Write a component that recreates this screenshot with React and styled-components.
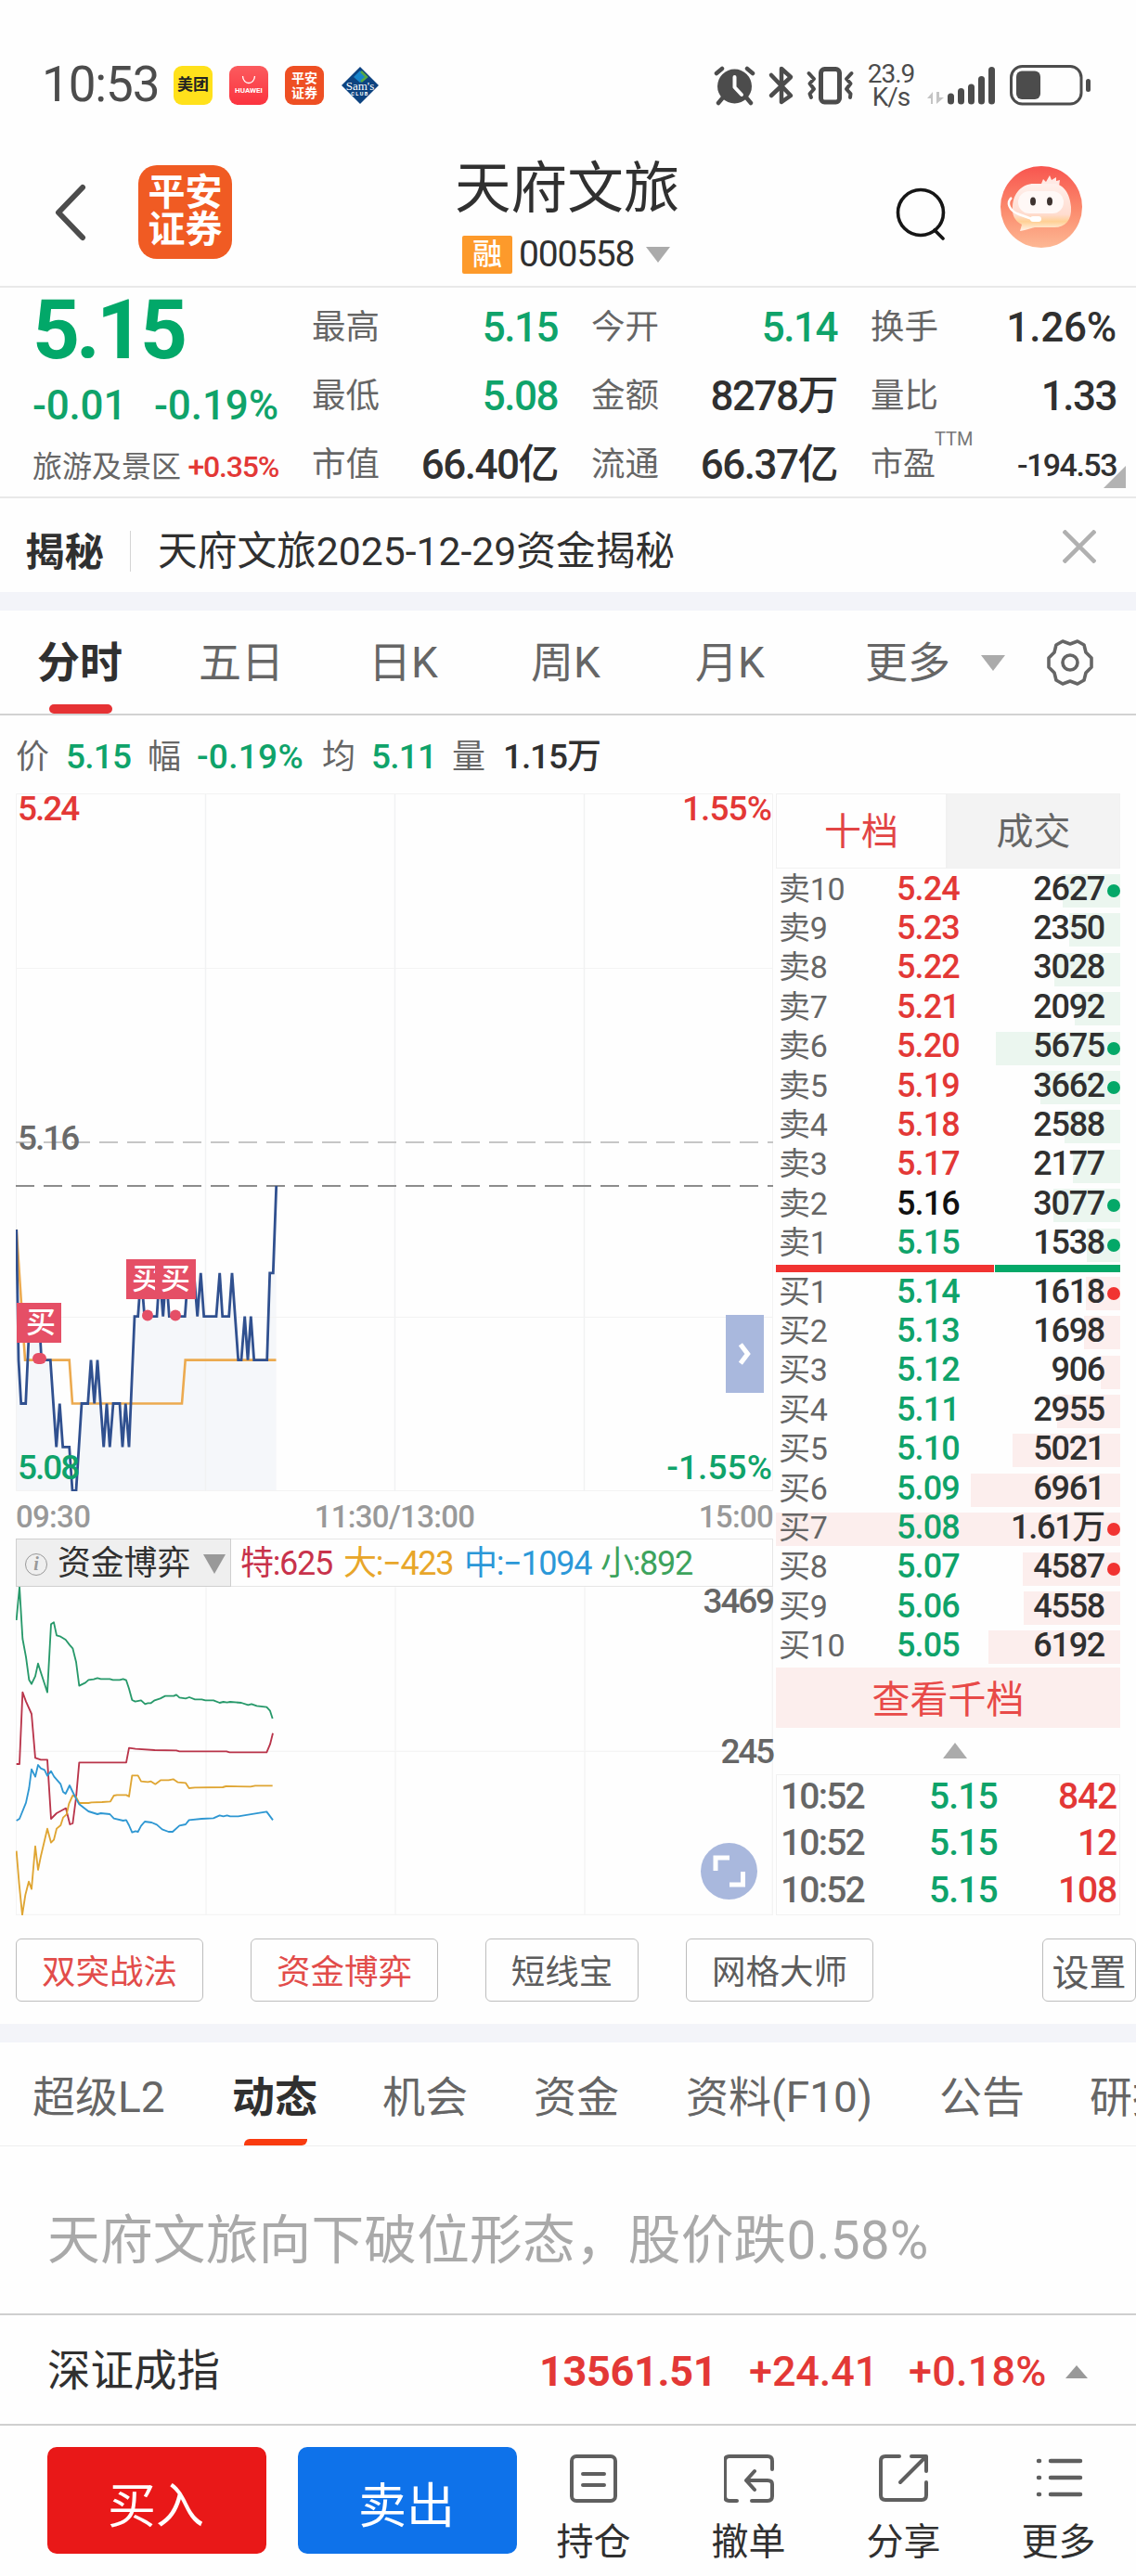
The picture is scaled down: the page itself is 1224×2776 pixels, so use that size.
import React from "react";
import styled, { createGlobalStyle } from "styled-components";

const COLOR = {
  green: "#0fa36a",
  red: "#e33836",
  ink: "#303030",
  gray: "#666666",
  line: "#e9e9e9",
  band: "#f3f4f9",
};

const GlobalStyle = createGlobalStyle`
  * {
    box-sizing: border-box;
  }
  body {
    margin: 0;
    background: #fefefe;
    overflow-x: hidden;
    font-family: Roboto, "Noto Sans CJK SC", sans-serif;
    color: ${COLOR.ink};
  }
  svg {
    display: block;
  }
`;

const Page = styled.div`
  width: 1224px;
  height: 2776px;
  overflow: hidden;
  display: flex;
  flex-direction: column;
`;

const Text = styled.span`
  font-size: ${(p) => p.$size || 36}px;
  font-weight: ${(p) => p.$weight || 400};
  color: ${(p) => p.$color || COLOR.ink};
  letter-spacing: ${(p) => p.$spacing || 0}px;
  line-height: 1.2;
  white-space: nowrap;
`;

/* ---------- status bar ---------- */

const StatusBar = styled.div`
  height: 130px;
  flex: none;
  padding: 52px 48px 0 45px;
  display: flex;
  justify-content: space-between;
`;

const StatusGroup = styled.div`
  height: 80px;
  display: flex;
  align-items: center;
`;

const Clock = styled(Text)`
  width: 142px;
`;

const AppBadge = styled.div`
  width: 42px;
  height: 42px;
  margin-right: 18px;
  border-radius: 9px;
  background: ${(p) => p.$bg};
  color: ${(p) => p.$color || "#fff"};
  font-size: ${(p) => p.$size}px;
  font-weight: 700;
  line-height: 1.15;
  display: flex;
  flex-direction: column;
  align-items: center;
  justify-content: center;
  white-space: nowrap;
`;

const Speed = styled.div`
  width: 54px;
  margin: 0 11px 0 12px;
  font-size: 28px;
  line-height: 25px;
  letter-spacing: -1px;
  color: #4c4c4c;
  text-align: center;
`;

/* ---------- header ---------- */

const Header = styled.header`
  height: 180px;
  flex: none;
  border-bottom: 2px solid ${COLOR.line};
  display: grid;
  grid-template-columns: 250px 1fr 259px;
`;

const HeaderLeft = styled.div`
  padding: 48px 0 0 58px;
  display: flex;
  justify-content: space-between;
`;

const BackIcon = styled.svg`
  margin-top: 19px;
`;

const Logo = styled.div`
  width: 101px;
  height: 101px;
  border-radius: 20px;
  background: #f05b23;
  color: #fff;
  font-size: 40px;
  line-height: 40px;
  font-weight: 700;
  text-align: center;
  padding-top: 10px;
`;

const HeaderTitle = styled.div`
  padding: 36px 0 0 0;
  margin-left: 240px;
`;

const StockName = styled.div`
  font-size: 60.6px;
  line-height: 76px;
  white-space: nowrap;
`;

const StockCode = styled.div`
  height: 42px;
  margin: 11px 0 0 8px;
  display: flex;
  align-items: center;
`;

const MarginTag = styled.span`
  width: 54px;
  height: 41px;
  margin-right: 7px;
  background: #fd9a2b;
  color: #fff;
  font-size: 32px;
  line-height: 40px;
  font-weight: 500;
  text-align: center;
  border-radius: 2px;
`;

const HeaderRight = styled.div`
  display: flex;
  padding-top: 49px;
`;

/* ---------- quote ---------- */

const Quote = styled.section`
  position: relative;
  height: 227px;
  flex: none;
  border-bottom: 2px solid ${COLOR.line};
  display: grid;
  grid-template-columns: 265px 265px 265px 265px;
  column-gap: 36px;
  padding: 4px 20px 0 35px;
`;

const PriceBlock = styled.div`
  display: flex;
  flex-direction: column;
`;

const BigPrice = styled.div`
  height: 85px;
  font-size: 89px;
  line-height: 84px;
  font-weight: 700;
  letter-spacing: -4px;
  color: #02a869;
`;

const PriceLine = styled.div`
  height: ${(p) => p.$height}px;
  display: flex;
  align-items: center;
  justify-content: space-between;
`;

const StatColumn = styled.div`
  padding-top: 2px;
  display: flex;
  flex-direction: column;
`;

const StatRow = styled.div`
  height: 74px;
  display: flex;
  align-items: center;
  justify-content: space-between;
`;

const Ttm = styled.sup`
  position: absolute;
  left: 1007px;
  top: 151px;
  font-size: 20px;
  color: #777;
`;

const Corner = styled.i`
  position: absolute;
  right: 11px;
  bottom: 9px;
  border-left: 24px solid transparent;
  border-bottom: 24px solid #b3b3b3;
`;

const Triangle = styled.i`
  flex: none;
  align-self: ${(p) => p.$align || "center"};
  border-left: ${(p) => p.$half || 13}px solid transparent;
  border-right: ${(p) => p.$half || 13}px solid transparent;
  border-${(p) => (p.$up ? "bottom" : "top")}: ${(p) => p.$height || 17}px solid ${(p) => p.$color || "#ababab"};
`;

/* ---------- notice ---------- */

const Notice = styled.div`
  height: 101px;
  flex: none;
  padding: 15px 43px 0 27px;
  display: flex;
  align-items: center;
`;

const NoticeRule = styled.i`
  width: 1px;
  height: 44px;
  margin: -3px 29px 0 28px;
  background: #d4d4d4;
`;

const CloseIcon = styled.svg`
  margin: -12px 0 0 auto;
`;

const Band = styled.div`
  height: 20px;
  flex: none;
  background: ${COLOR.band};
`;

/* ---------- tabs ---------- */

const PeriodTabs = styled.nav`
  height: 113px;
  flex: none;
  padding-left: 40px;
  border-bottom: 2px solid #d2d2d2;
  display: flex;
`;

const Tab = styled.div`
  width: ${(p) => p.$width}px;
  flex: none;
  padding-top: ${(p) => p.$top || 28}px;
  font-size: 46px;
  line-height: 56px;
  white-space: nowrap;
  font-weight: ${(p) => (p.$active ? 700 : 400)};
  color: ${(p) => (p.$active ? COLOR.ink : COLOR.gray)};
`;

const TabMark = styled.i`
  display: block;
  width: 68px;
  height: 10px;
  margin: 17px 0 0 13px;
  border-radius: 5px;
  background: #e63234;
`;

const GearIcon = styled.svg`
  margin: 30px 0 0 45px;
`;

const InfoRow = styled.div`
  height: 84px;
  flex: none;
  padding: 7px 0 0 17px;
  display: flex;
  align-items: center;
`;

const InfoValue = styled(Text)`
  width: ${(p) => p.$width}px;
  flex: none;
`;

/* ---------- chart + book ---------- */

const Market = styled.section`
  height: 1210px;
  flex: none;
  padding: 0 17px;
  display: grid;
  grid-template-columns: 816px 371px;
  column-gap: 3px;
`;

const Charts = styled.div`
  display: flex;
  flex-direction: column;
`;

const PriceChart = styled.div`
  position: relative;
  height: 752px;
`;

const ChartLabel = styled.span`
  position: absolute;
  top: ${(p) => p.$top}px;
  ${(p) => (p.$right ? `right: ${p.$right}px` : "left: 2px")};
  font-size: 37px;
  line-height: 44px;
  font-weight: 500;
  letter-spacing: ${(p) => p.$spacing ?? -2}px;
  color: ${(p) => p.$color};
`;

const BuyFlag = styled.span`
  position: absolute;
  left: ${(p) => p.$left}px;
  top: ${(p) => p.$top}px;
  width: ${(p) => p.$width}px;
  height: 43px;
  padding-left: ${(p) => p.$pad}px;
  overflow: hidden;
  background: #e54f66;
  color: #fff;
  font-size: 32px;
  line-height: 43px;
  font-weight: 500;
`;

const Expander = styled.div`
  position: absolute;
  right: 10px;
  top: 562px;
  width: 41px;
  height: 84px;
  background: #a9b8dd;
  display: flex;
  align-items: center;
  justify-content: center;
`;

const TimeAxis = styled.div`
  height: 51px;
  padding-top: 5px;
  display: flex;
  justify-content: space-between;
`;

const AxisText = styled(Text)`
  font-size: 33px;
  font-weight: 500;
  letter-spacing: -0.7px;
  color: #999;
  line-height: 46px;
`;

const FlowBar = styled.div`
  height: 52px;
  border: 1px solid #e6e6e6;
  display: flex;
  align-items: center;
`;

const FlowPicker = styled.div`
  width: 232px;
  height: 52px;
  margin: 0 10px 0 -1px;
  border: 1px solid #cfcfcf;
  background: #efefef;
  padding: 3px 3px 0 9px;
  display: flex;
  align-items: center;
`;

const FlowName = styled(Text)`
  margin: 0 14px 0 11px;
`;

const InfoDot = styled.span`
  width: 24px;
  height: 24px;
  border: 1px solid #999;
  border-radius: 50%;
  font: italic 700 20px/21px "Liberation Serif", serif;
  color: #999;
  text-align: center;
`;

const FlowItem = styled(Text)`
  width: ${(p) => p.$width}px;
  flex: none;
  padding-top: 3px;
  letter-spacing: -1.3px;
`;

const FlowChart = styled.div`
  position: relative;
  height: 354px;
`;

const ZoomButton = styled.div`
  position: absolute;
  right: 17px;
  top: 276px;
  width: 61px;
  height: 61px;
  border-radius: 50%;
  background: #a9b8dd;
`;

const Book = styled.div`
  display: flex;
  flex-direction: column;
`;

const BookTabs = styled.div`
  height: 81px;
  margin-bottom: 3px;
  display: grid;
  grid-template-columns: 184px 187px;
`;

const BookTab = styled.div`
  border: 1px solid #f1f1f1;
  background: ${(p) => (p.$active ? "transparent" : "#f3f3f3")};
  color: ${(p) => (p.$active ? "#e24545" : COLOR.gray)};
  font-size: 40px;
  line-height: 82px;
  height: 81px;
  text-align: center;
`;

const Level = styled.div`
  height: 42.4px;
  padding: 3px 0 3px 3px;
  background: linear-gradient(${(p) => p.$bar}, ${(p) => p.$bar}) right 3px / ${(p) => p.$fill}px 36px no-repeat;
  display: grid;
  grid-template-columns: 127px 1fr 154px 17px;
  align-items: center;
  line-height: 30px;
`;

const LevelText = styled(Text)`
  line-height: 30px;
  margin-top: -5px;
  text-align: ${(p) => (p.$end ? "right" : "left")};
`;

const Dot = styled.i`
  width: 14px;
  height: 14px;
  margin-left: 3px;
  border-radius: 50%;
  background: ${(p) => p.$color};
`;

const Balance = styled.div`
  height: 8px;
  margin: 0 0 2px;
  display: grid;
  grid-template-columns: 235px 135px;
  gap: 1px;
  & > i:first-child {
    background: #f13331;
  }
  & > i:last-child {
    background: #04a868;
  }
`;

const MoreLevels = styled.div`
  height: 65px;
  background: #fceeed;
  color: #e84a48;
  font-size: 41px;
  line-height: 70px;
  text-align: center;
`;

const Collapse = styled.div`
  height: 50px;
  display: flex;
  justify-content: center;
  padding: 16px 0 0 15px;
`;

const Deals = styled.div`
  height: 152px;
  border: 1px solid #f1f1f1;
  padding: 0 3px 0 4px;
`;

const Deal = styled.div`
  height: 50.4px;
  padding-bottom: 8px;
  display: grid;
  grid-template-columns: 160px 1fr 100px;
  align-items: center;
  & > span:last-child {
    text-align: right;
  }
`;

/* ---------- tools ---------- */

const Tools = styled.div`
  height: 116px;
  flex: none;
  padding: 24px 0 0 17px;
  display: flex;
  gap: 51px;
`;

const Tool = styled.button`
  width: ${(p) => p.$width}px;
  height: 68px;
  flex: none;
  padding: 0 0 1px;
  border: 1px solid #bdbdbd;
  border-radius: 6px;
  background: none;
  font-family: inherit;
  font-size: ${(p) => p.$size || 36.5}px;
  white-space: nowrap;
  color: ${(p) => (p.$hot ? "#e24c4a" : "#5c5c5c")};
  &:last-child {
    margin-left: auto;
  }
`;

const DetailTabs = styled.nav`
  height: 112px;
  flex: none;
  padding-left: 35px;
  border-bottom: 1px solid #eee;
  display: flex;
  overflow: hidden;
`;

const DetailMark = styled.i`
  display: block;
  width: 68px;
  height: 7px;
  margin: 17px 0 0 13px;
  border-radius: 6px 0 6px 0;
  background: #f93b0f;
`;

const News = styled.div`
  height: 182px;
  flex: none;
  padding: 24px 0 0 51px;
  border-bottom: 2px solid #cfcfcf;
  display: flex;
  align-items: center;
`;

const IndexRow = styled.div`
  height: 119px;
  flex: none;
  padding: 5px 51px 0 51px;
  border-bottom: 2px solid #cfcfcf;
  display: flex;
  align-items: center;
`;

const IndexName = styled(Text)`
  width: 530px;
`;

const BottomBar = styled.footer`
  height: 162px;
  padding: 23px 0 0 51px;
  display: flex;
`;

const TradeButton = styled.button`
  width: 236px;
  height: 115px;
  margin-right: ${(p) => p.$gap}px;
  padding: 3px 2px 0 0;
  flex: none;
  border: 0;
  border-radius: 10px;
  background: ${(p) => p.$bg};
  color: #fff;
  font-family: inherit;
  font-size: 52px;
`;

const Action = styled.div`
  width: 167px;
  flex: none;
  display: flex;
  flex-direction: column;
  align-items: center;
  font-size: 40px;
  line-height: 48px;
  & > svg {
    margin: 7px 0 18px;
  }
`;

const sells = [
  ["10", "5.24", "2627", 62, 1],
  ["9", "5.23", "2350", 55, 0],
  ["8", "5.22", "3028", 71, 0],
  ["7", "5.21", "2092", 49, 0],
  ["6", "5.20", "5675", 134, 1],
  ["5", "5.19", "3662", 86, 1],
  ["4", "5.18", "2588", 60, 0],
  ["3", "5.17", "2177", 51, 0],
  ["2", "5.16", "3077", 72, 1],
  ["1", "5.15", "1538", 36, 1],
];

const buys = [
  ["1", "5.14", "1618", 37, 1],
  ["2", "5.13", "1698", 39, 0],
  ["3", "5.12", "906", 21, 0],
  ["4", "5.11", "2955", 68, 0],
  ["5", "5.10", "5021", 116, 0],
  ["6", "5.09", "6961", 161, 0],
  ["7", "5.08", "1.61万", 371, 1],
  ["8", "5.07", "4587", 105, 1],
  ["9", "5.06", "4558", 104, 0],
  ["10", "5.05", "6192", 142, 0],
];

const stats = [
  [
    ["最高", "5.15", COLOR.green],
    ["最低", "5.08", COLOR.green],
    ["市值", "66.40亿"],
  ],
  [
    ["今开", "5.14", COLOR.green],
    ["金额", "8278万"],
    ["流通", "66.37亿"],
  ],
  [
    ["换手", "1.26%"],
    ["量比", "1.33"],
    ["市盈", "-194.53"],
  ],
];

// one tick is 47px; each entry is [x, ticks below 5.15]
const priceTicks = [
  [0.7, 1], [3, 4], [5.7, 5], [10.7, 5], [15, 3], [25, 3], [27.7, 4], [37.3, 4], [43.7, 6], [47.3, 5], [50.7, 6],
  [57.7, 6], [61, 7], [65, 7], [71, 5], [77.7, 5], [81, 4], [84.7, 5], [88, 4], [94.7, 6], [98, 5], [101.3, 6],
  [105, 5], [112, 5], [115, 6], [118.3, 5], [122, 6], [128, 3], [131.7, 3], [135, 2], [138.7, 3], [152, 3], [155, 2],
  [158.7, 3], [162, 2], [165.3, 3], [182.3, 3], [185.7, 2], [192, 2], [195.7, 3], [199.3, 2], [202.7, 3], [216, 3],
  [219.7, 2], [222.7, 3], [229.7, 3], [233, 2], [239.7, 4], [243, 4], [246.7, 3], [250, 4], [253.3, 3], [256.7, 4],
  [270.7, 4], [273.7, 2], [277.3, 2], [280.7, 0],
];
const averageTicks = [[0.7, 1], [10, 4], [57.7, 4], [61, 5], [179, 5], [182.7, 4], [280.5, 4]];
const toPoints = (ticks) => ticks.map(([x, n]) => `${x},${423 + n * 46.9}`).join(" ");

const flows = [
  ["#27996a", "53,317 63,210 73,377 84,436 94,510 102,523 114,498 123,457 132,486 153,550 165,330 174,324 183,366 196,370 212,380 225,397 235,408 246,452 256,529 276,519 286,510 303,508 315,504 326,507 355,507 365,510 387,510 398,507 408,511 417,538 427,575 437,580 456,576 469,588 478,585 488,585 500,576 518,570 534,562 562,562 570,558 580,567 600,570 612,566 630,573 652,573 664,576 690,576 710,584 722,581 734,583 744,581 780,584 802,591 813,588 830,594 862,598 873,610 881,635"],
  ["#b9344a", "53,782 63,782 73,550 84,580 102,620 114,762 132,768 153,768 165,959 183,941 205,929 213,925 226,977 235,974 246,890 256,777 408,777 417,730 438,733 500,737 570,738 580,741 732,741 742,744 862,744 873,718 882,682"],
  ["#dfa532", "53,1063 62,1170 72,1270 82,1205 93,1162 102,1186 114,1048 123,1124 132,1080 153,991 165,1036 174,1027 183,991 196,980 204,955 215,945 223,910 235,884 245,887 256,908 286,908 296,906 330,905 357,903 368,884 378,882 408,882 417,887 427,819 446,819 456,838 478,840 488,838 502,847 520,834 545,834 560,831 575,841 600,843 611,860 630,858 720,857 730,854 810,855 825,852 881,852"],
  ["#2e97d2", "53,965 63,959 84,907 94,860 102,799 114,823 123,785 132,796 144,801 153,820 165,805 175,823 196,847 204,872 212,878 225,851 235,872 246,894 256,912 286,935 315,944 326,941 355,944 368,958 398,965 408,963 417,980 427,1003 438,999 446,1001 456,982 468,968 490,971 507,978 524,993 545,1001 558,1001 580,981 600,977 611,963 652,959 690,957 710,948 722,951 734,948 744,951 770,951 802,946 862,936 882,963"],
];

function SamsIcon() {
  return (
    <svg width="42" height="42" viewBox="0 0 42 42">
      <path d="M21 1 41 21 21 41 1 21Z" fill="#0d4380" />
      <path d="M21 5 29 12 21 18 14 12Z" fill="#1785cc" />
      <path d="M22 6 28 12 22 17" fill="none" stroke="#55a944" strokeWidth="2.5" />
      <text x="21" y="26" textAnchor="middle" fontFamily="Liberation Serif" fontSize="13" fill="#fff">Sam's</text>
      <text x="21" y="32" textAnchor="middle" fontSize="5.5" letterSpacing="1.5" fontWeight="700" fill="#fff">CLUB</text>
    </svg>
  );
}

function StatusIcons() {
  return (
    <svg width="152" height="44" viewBox="769 69 152 44" fill="none" stroke="#4c4c4c" strokeLinecap="round" strokeLinejoin="round">
      <circle cx="791.5" cy="92" r="18.5" fill="#4c4c4c" stroke="none" />
      <path d="M772 78 778 73M811 78 805 73M779 104 774 110M804 104 809 110" strokeWidth="4.5" />
      <path d="M791.5 82V93L799 101" stroke="#fff" strokeWidth="4" />
      <path d="M831 80 852 102 842 109V73L852 82 831 102" strokeWidth="4.5" />
      <rect x="884.5" y="73.500" width="20" height="35.500" rx="4" strokeWidth="5" />
      <path d="M871.500 78 877 84 872.500 89 877 95 872.500 100 874 104M917.500 78 912 84 916.500 89 912 95 916.500 100 916 104" strokeWidth="4" />
    </svg>
  );
}

function SignalIcons() {
  return (
    <svg width="178" height="44" viewBox="997 69 178 44">
      <path d="M1004 111V98L998 105H1002V111ZM1008 98V111L1016 104H1011V98Z" fill="#c4c4c4" />
      <g fill="#4c4c4c">
        <rect x="1020" y="99.500" width="7" height="12" rx="3.500" />
        <rect x="1031" y="94" width="7" height="17.500" rx="3.500" />
        <rect x="1042" y="89.500" width="7" height="22" rx="3.500" />
        <rect x="1053" y="81" width="7" height="30.500" rx="3.500" />
        <rect x="1064" y="71" width="7" height="40.500" rx="3.500" />
        <rect x="1094" y="75.500" width="26" height="30.500" rx="6" />
        <rect x="1169" y="84" width="5" height="14" rx="2.500" />
      </g>
      <rect x="1088.500" y="70.500" width="75.500" height="40.500" rx="12" fill="none" stroke="#4c4c4c" strokeWidth="3" />
    </svg>
  );
}

function Avatar() {
  return (
    <svg width="88" height="88" viewBox="0 0 88 88">
      <defs>
        <linearGradient id="face" x1="0" y1="0" x2="0" y2="1">
          <stop offset="0" stopColor="#f8554f" />
          <stop offset="0.55" stopColor="#fb8c6e" />
          <stop offset="1" stopColor="#fdb894" />
        </linearGradient>
        <linearGradient id="body" x1="0" y1="0" x2="0" y2="1">
          <stop offset="0" stopColor="#fff0ec" />
          <stop offset="0.65" stopColor="#ffdccf" />
          <stop offset="0.8" stopColor="#ffd094" />
          <stop offset="1" stopColor="#fff3ec" />
        </linearGradient>
      </defs>
      <circle cx="44" cy="44" r="44" fill="url(#face)" />
      <path d="M44 19 46 14 49 17 53 10 55 15 60 12 60 16 64 15 63 22Z" fill="#ffe9e4" />
      <path d="M36 19H57C68 19 75 30 76 44C77 58 70 66 58 66H37C31 67 29 69 21 70L23 63C15 59 12 52 13 43C14 29 23 19 36 19Z" fill="url(#body)" />
      <rect x="19" y="27" width="49" height="24" rx="12" fill="#fff8f6" />
      <ellipse cx="35" cy="38" rx="3" ry="4.500" fill="#3e3330" />
      <ellipse cx="53" cy="38" rx="3" ry="4.500" fill="#3e3330" />
      <path d="M12 34C6 39 9 48 20 52L34 57" fill="none" stroke="#fff" strokeWidth="2.500" />
      <rect x="32" y="54" width="12" height="6" rx="3" fill="#fff" />
    </svg>
  );
}

function Levels({ rows, side }) {
  const sell = side === "卖";
  return rows.map(([n, price, volume, fill, dot]) => {
    const priceColor = price === "5.16" ? "#111" : price > "5.16" ? COLOR.red : COLOR.green;
    return (
      <Level key={n} $fill={fill} $bar={sell ? "#ebf6ef" : "#fceeed"}>
        <LevelText $size={34} $color={COLOR.gray} $spacing={-0.3}>{side}{n}</LevelText>
        <LevelText $size={36} $weight={500} $color={priceColor} $spacing={-0.9}>{price}</LevelText>
        <LevelText $size={36} $weight={500} $spacing={-1.3} $end>{volume}</LevelText>
        {dot ? <Dot $color={sell ? "#04a868" : "#f13331"} /> : null}
      </Level>
    );
  });
}

export default function App() {
  return (
    <Page>
      <GlobalStyle />
      <StatusBar>
        <StatusGroup>
          <Clock $size={53} $color="#4c4c4c" $spacing={-1.1}>10:53</Clock>
          <AppBadge $bg="#ffe11b" $color="#222" $size={17}>美团</AppBadge>
          <AppBadge $bg="linear-gradient(#fb5b5e, #fb333f)" $size={8}>
            <svg width="16" height="12" viewBox="0 0 16 12" fill="none" stroke="#fff" strokeWidth="1.300">
              <path d="M1.500 1C2 11 14 11 14.500 1" />
            </svg>
            HUAWEI
          </AppBadge>
          <AppBadge $bg="#ee4f23" $size={14}>
            <span>平安</span>
            <span>证券</span>
          </AppBadge>
          <SamsIcon />
        </StatusGroup>
        <StatusGroup>
          <StatusIcons />
          <Speed>23.9<br />K/s</Speed>
          <SignalIcons />
        </StatusGroup>
      </StatusBar>

      <Header>
        <HeaderLeft>
          <BackIcon width="36" height="64" viewBox="0 0 36 64" fill="none" stroke="#4c4c4c" strokeWidth="6" strokeLinecap="round" strokeLinejoin="round">
            <path d="M31 5 5 32 31 59" />
          </BackIcon>
          <Logo>平安<br />证券</Logo>
        </HeaderLeft>
        <HeaderTitle>
          <StockName>天府文旅</StockName>
          <StockCode>
            <MarginTag>融</MarginTag>
            <Text $size={39} $spacing={-1.2}>000558</Text>
            <Triangle style={{ marginLeft: 13 }} />
          </StockCode>
        </HeaderTitle>
        <HeaderRight>
          <svg width="113" height="88" viewBox="965 179 113 88" fill="none" stroke="#161616" strokeWidth="3.600" strokeLinecap="round">
            <circle cx="992" cy="229" r="24.500" />
            <path d="M1007 248 1016 257" />
          </svg>
          <Avatar />
        </HeaderRight>
      </Header>

      <Quote>
        <PriceBlock>
          <BigPrice>5.15</BigPrice>
          <PriceLine $height={76}>
            <Text $size={44} $weight={500} $color={COLOR.green} $spacing={-0.2}>-0.01</Text>
            <Text $size={44} $weight={500} $color={COLOR.green} $spacing={-0.1}>-0.19%</Text>
          </PriceLine>
          <PriceLine $height={56}>
            <Text $size={32} $color={COLOR.gray}>旅游及景区</Text>
            <Text $size={32} $weight={500} $color={COLOR.red} $spacing={-1.2}>+0.35%</Text>
          </PriceLine>
        </PriceBlock>
        {stats.map((column) => (
          <StatColumn key={column[0][0]}>
            {column.map(([label, value, color]) => (
              <StatRow key={label}>
                <Text $size={label === "市盈" ? 35 : 36.5} $color={COLOR.gray}>{label}</Text>
                <Text
                  $size={label === "市盈" ? 34 : 44}
                  $weight={500}
                  $color={color}
                  $spacing={value.endsWith("%") ? -0.2 : -1.5}
                >
                  {value}
                </Text>
              </StatRow>
            ))}
          </StatColumn>
        ))}
        <Ttm>TTM</Ttm>
        <Corner />
      </Quote>

      <Notice>
        <Text $size={42.5} $weight={700}>揭秘</Text>
        <NoticeRule />
        <Text $size={42.7}>天府文旅2025-12-29资金揭秘</Text>
        <CloseIcon width="36" height="36" viewBox="0 0 36 36" stroke="#b0b0b0" strokeWidth="4.500">
          <path d="M1 1 35 35M35 1 1 35" />
        </CloseIcon>
      </Notice>
      <Band />

      <PeriodTabs>
        <Tab $width={174} $active>
          分时
          <TabMark />
        </Tab>
        <Tab $width={183}>五日</Tab>
        <Tab $width={175}>日K</Tab>
        <Tab $width={177}>周K</Tab>
        <Tab $width={183}>月K</Tab>
        <Tab $width={125}>更多</Tab>
        <Triangle $align="flex-start" style={{ marginTop: 48 }} />
        <GearIcon width="50" height="52" viewBox="0 0 50 52" fill="none" stroke="#666" strokeWidth="3.600" strokeLinejoin="round">
          <path d="M17 3 25 6 33 3 40 7 42 15 48 21V31L42 37 40 45 33 49 25 46 17 49 10 45 8 37 2 31V21L8 15 10 7Z" />
          <circle cx="25" cy="26" r="8" />
        </GearIcon>
      </PeriodTabs>

      <InfoRow>
        <InfoValue $width={54} $color={COLOR.gray}>价</InfoValue>
        <InfoValue $width={88} $size={37} $weight={500} $color={COLOR.green} $spacing={-0.8}>5.15</InfoValue>
        <InfoValue $width={53} $color={COLOR.gray}>幅</InfoValue>
        <InfoValue $width={135} $size={37} $weight={500} $color={COLOR.green} $spacing={0.3}>-0.19%</InfoValue>
        <InfoValue $width={53} $color={COLOR.gray}>均</InfoValue>
        <InfoValue $width={87} $size={37} $weight={500} $color={COLOR.green} $spacing={-0.8}>5.11</InfoValue>
        <InfoValue $width={55} $color={COLOR.gray}>量</InfoValue>
        <InfoValue $width={120} $size={37} $weight={500} $spacing={-1.1}>1.15万</InfoValue>
      </InfoRow>

      <Market>
        <Charts>
          <PriceChart>
            <svg width="816" height="752" viewBox="0 0 816 752" fill="none">
              <polygon points={`${toPoints(priceTicks)} 280.700,751 0.700,751`} fill="#f5f7fa" />
              <path d="M0.500 0.500H815.500V751.500H0.500ZM0 188.500H816M0 564.500H816" stroke="#f3f3f3" />
              <path d="M204.500 0V752M408.500 0V752M612.500 0V752" stroke="#f1f2f3" strokeWidth="1.500" />
              <path d="M0 376H816" stroke="#c6c6c6" strokeWidth="2" strokeDasharray="20 10" />
              <path d="M0 423H816" stroke="#8c8c8c" strokeWidth="2" strokeDasharray="20 10" />
              <polyline points={toPoints(averageTicks)} stroke="#ecaa4f" strokeWidth="2.600" />
              <polyline points={toPoints(priceTicks)} stroke="#30508f" strokeWidth="2.800" />
              <g fill="#e54f66">
                <rect x="18" y="603" width="15" height="12" rx="6" />
                <circle cx="142" cy="562.500" r="6" />
                <circle cx="172" cy="562.500" r="6" />
              </g>
            </svg>
            <ChartLabel $top={-5} $color={COLOR.red}>5.24</ChartLabel>
            <ChartLabel $top={-5} $color={COLOR.red} $spacing={-0.9} $right={2}>1.55%</ChartLabel>
            <ChartLabel $top={350} $color="#6a6a6a">5.16</ChartLabel>
            <ChartLabel $top={705} $color={COLOR.green}>5.08</ChartLabel>
            <ChartLabel $top={705} $color={COLOR.green} $spacing={0.1} $right={1}>-1.55%</ChartLabel>
            <BuyFlag $left={1} $top={549} $width={48} $pad={10}>买</BuyFlag>
            <BuyFlag $left={119} $top={502} $width={31} $pad={6}>买</BuyFlag>
            <BuyFlag $left={150} $top={502} $width={44} $pad={6}>买</BuyFlag>
            <Expander>
              <svg width="16" height="24" viewBox="0 0 16 28" fill="none" stroke="#fff" strokeWidth="6">
                <path d="M2 2 11 14 2 26" />
              </svg>
            </Expander>
          </PriceChart>
          <TimeAxis>
            <AxisText>09:30</AxisText>
            <AxisText>11:30/13:00</AxisText>
            <AxisText>15:00</AxisText>
          </TimeAxis>
          <FlowBar>
            <FlowPicker>
              <InfoDot>i</InfoDot>
              <FlowName $size={35.8}>资金博弈</FlowName>
              <Triangle $half={12.5} $height={21} $color="#999" />
            </FlowPicker>
            <FlowItem $width={111} $color="#c8324b">特:625</FlowItem>
            <FlowItem $width={130} $color="#e8a62a">大:−423</FlowItem>
            <FlowItem $width={147} $color="#2b98d8">中:−1094</FlowItem>
            <FlowItem $width={100} $color="#3da35d">小:892</FlowItem>
          </FlowBar>
          <FlowChart>
            <svg width="816" height="354" viewBox="51 209 2448 1062" fill="none">
              <path d="M52 210V1269H2497V210M52 741H2497M666 210V1269M1278 210V1269M1890 210V1269" stroke="#f4f4f4" strokeWidth="4" />
              {flows.map(([color, points]) => (
                <polyline key={color} points={points} stroke={color} strokeWidth="5.500" strokeLinejoin="round" />
              ))}
            </svg>
            <ChartLabel $top={-6} $color={COLOR.gray} $spacing={-2.2} $right={0.1}>3469</ChartLabel>
            <ChartLabel $top={156} $color={COLOR.gray} $spacing={-2.2} $right={0.1}>245</ChartLabel>
            <ZoomButton>
              <svg width="61" height="61" viewBox="0 0 61 61" fill="none" stroke="#fff" strokeWidth="5">
                <path d="M31 16H16V30M31 45H45.500V31" />
              </svg>
            </ZoomButton>
          </FlowChart>
        </Charts>

        <Book>
          <BookTabs>
            <BookTab $active>十档</BookTab>
            <BookTab>成交</BookTab>
          </BookTabs>
          <Levels rows={sells} side="卖" />
          <Balance>
            <i />
            <i />
          </Balance>
          <Levels rows={buys} side="买" />
          <MoreLevels>查看千档</MoreLevels>
          <Collapse>
            <Triangle $up $align="flex-start" />
          </Collapse>
          <Deals>
            {["842", "12", "108"].map((volume) => (
              <Deal key={volume}>
                <Text $size={39} $weight={500} $color={COLOR.gray} $spacing={-1.8}>10:52</Text>
                <Text $size={39} $weight={500} $color={COLOR.green} $spacing={-0.9}>5.15</Text>
                <Text $size={39} $weight={500} $color={COLOR.red} $spacing={-1.2}>{volume}</Text>
              </Deal>
            ))}
          </Deals>
        </Book>
      </Market>

      <Tools>
        <Tool $width={202} $hot>双突战法</Tool>
        <Tool $width={202} $hot>资金博弈</Tool>
        <Tool $width={165}>短线宝</Tool>
        <Tool $width={202}>网格大师</Tool>
        <Tool $width={101} $size={40}>设置</Tool>
      </Tools>
      <Band />

      <DetailTabs>
        <Tab $width={215} $top={31}>超级L2</Tab>
        <Tab $width={162} $top={31} $active>
          动态
          <DetailMark />
        </Tab>
        <Tab $width={163} $top={31}>机会</Tab>
        <Tab $width={164} $top={31}>资金</Tab>
        <Tab $width={273} $top={31}>资料(F10)</Tab>
        <Tab $width={162} $top={31}>公告</Tab>
        <Tab $width={92} $top={31}>研报</Tab>
      </DetailTabs>

      <News>
        <Text $size={56.7} $color="#a9a9a9" $spacing={0.2}>天府文旅向下破位形态，股价跌0.58%</Text>
      </News>

      <IndexRow>
        <IndexName $size={46.5}>深证成指</IndexName>
        <InfoValue $width={226} $size={45} $weight={700} $color={COLOR.red} $spacing={-0.3}>13561.51</InfoValue>
        <InfoValue $width={172} $size={45} $weight={500} $color={COLOR.red} $spacing={-0.1}>+24.41</InfoValue>
        <InfoValue $width={169} $size={45} $weight={500} $color={COLOR.red} $spacing={0.2}>+0.18%</InfoValue>
        <Triangle $up $half={12} $height={14} $color="#999" />
      </IndexRow>

      <BottomBar>
        <TradeButton $bg="#e91818" $gap={34}>买入</TradeButton>
        <TradeButton $bg="#0e72ea" $gap={-1}>卖出</TradeButton>
        <Action>
          <svg width="54" height="54" viewBox="0 0 54 54" fill="none" stroke="#5f5f5f" strokeWidth="4" strokeLinecap="round">
            <rect x="3" y="3" width="47" height="48" rx="5" />
            <path d="M15 22H38M15 34H38" />
          </svg>
          持仓
        </Action>
        <Action>
          <svg width="54" height="54" viewBox="0 0 54 54" fill="none" stroke="#5f5f5f" strokeWidth="4" strokeLinecap="round" strokeLinejoin="round">
            <path d="M52 17V8Q52 3 47 3H6Q1 3 1 8V46Q1 51 6 51H14M30 51H47Q52 51 52 46V33Q52 29 47 29H24M33 19 24 29 33 39" />
          </svg>
          撤单
        </Action>
        <Action>
          <svg width="54" height="54" viewBox="0 0 54 54" fill="none" stroke="#5f5f5f" strokeWidth="4" strokeLinecap="round" strokeLinejoin="round">
            <path d="M22 3H7Q2 3 2 8V45Q2 50 7 50H46Q51 50 51 45V31M35 3H51V19M50 4 23 31" />
          </svg>
          分享
        </Action>
        <Action>
          <svg width="54" height="54" viewBox="0 0 54 54" fill="none" stroke="#5f5f5f" strokeWidth="4.500" strokeLinecap="round">
            <path d="M5 8H6M18 8H50M5 26H6M18 26H50M5 44H6M18 44H50" />
          </svg>
          更多
        </Action>
      </BottomBar>
    </Page>
  );
}
